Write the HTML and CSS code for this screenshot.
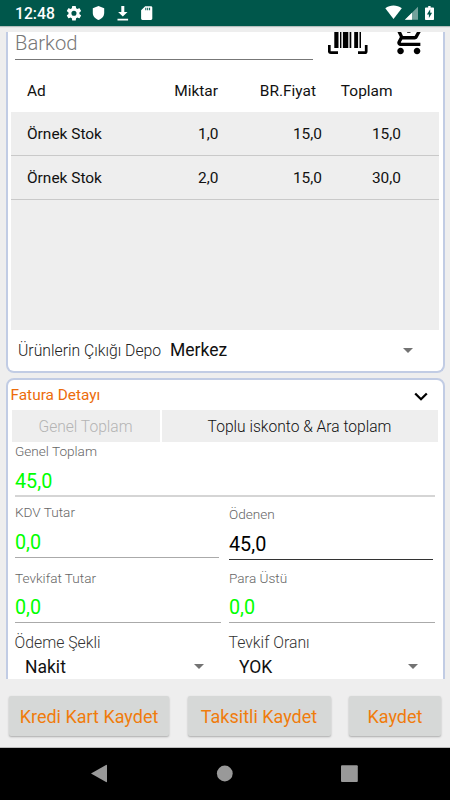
FILE: index.html
```html
<!DOCTYPE html>
<html lang="tr">
<head>
<meta charset="utf-8">
<title>Fatura</title>
<link rel="stylesheet" href="styles.css">
</head>
<body>
<header class="status">
  <span class="clock">12:48</span>
  <svg class="status-left" width="96" height="26" viewBox="0 0 96 26" fill="#fff">
    <g transform="translate(5.2 4.5) scale(.73)"><path d="M19.43 12.98c.04-.32.07-.64.07-.98s-.03-.66-.07-.98l2.11-1.65c.19-.15.24-.42.12-.64l-2-3.46c-.12-.22-.39-.3-.61-.22l-2.49 1c-.52-.4-1.08-.73-1.69-.98l-.38-2.65A.49.49 0 0 0 14 2h-4c-.25 0-.46.18-.49.42l-.38 2.65c-.61.25-1.17.59-1.69.98l-2.49-1c-.23-.09-.49 0-.61.22l-2 3.46c-.13.22-.07.49.12.64l2.11 1.65c-.04.32-.07.65-.07.98s.03.66.07.98l-2.11 1.65c-.19.15-.24.42-.12.64l2 3.46c.12.22.39.3.61.22l2.49-1c.52.4 1.08.73 1.69.98l.38 2.65c.03.24.24.42.49.42h4c.25 0 .46-.18.49-.42l.38-2.65c.61-.25 1.17-.59 1.69-.98l2.49 1c.23.09.49 0 .61-.22l2-3.46c.12-.22.07-.49-.12-.64l-2.11-1.65zM12 15.5a3.5 3.5 0 1 1 0-7 3.5 3.5 0 0 1 0 7z"/></g>
    <path d="M38.500 6l5.700 2.300v4.500c0 3.400-2.300 6-5.700 7.200-3.400-1.200-5.700-3.800-5.700-7.200V8.300z"/>
    <path d="M61.300 6h3v6h3.200l-4.700 4.600-4.700-4.600h3.200zM57.500 18.800h10.600v1.700H57.500z"/>
    <path fill-rule="evenodd" d="M85.200 6.200h5.800c.7 0 1.300.6 1.300 1.300v11c0 .8-.6 1.400-1.300 1.400h-8.600c-.7 0-1.300-.6-1.300-1.400v-8.200zM85.300 7.800v2.400h1V7.800zM87.200 7.800v2.400h1V7.800zM89.100 7.800v2.400h1V7.800z"/>
  </svg>
  <svg class="status-right" width="52" height="26" viewBox="0 0 52 26" fill="#fff">
    <path d="M.3 8.200C5 4.700 12 4.700 16.800 8.200L8.500 19z"/>
    <path d="M33 6.700v13.100H20z" opacity=".45"/><path d="M27 12.700v7.100h-7.200z"/>
    <path fill-rule="evenodd" d="M43.200 6h2.400v1.500h2.600c.5 0 .8.300.8.800v11c0 .5-.3.800-.8.800h-7.400c-.5 0-.8-.3-.8-.8v-11c0-.5.300-.8.800-.8h2.400zM45.200 9.300l-3.300 5.200h2V18l3.200-5.200h-1.900z"/>
  </svg>
</header>
<main class="viewport">
  <section class="card products">
    <div class="search">
      <div class="barcode-input"><span>Barkod</span></div>
      <svg class="scan" width="40" height="28" viewBox="0 0 40 28">
        <path d="M6.300 0h4.200v16H6.300zM12 0h1.400v16H12zM14.900 0h5.400v16h-5.400zM21.600 0h1.700v16h-1.700zM26.200 0h3.900v16h-3.900zM31.500 0h1.500v16h-1.500z"/>
        <path d="M1.300 13v6.200q0 1.500 1.500 1.500H10M38.200 13v6.200q0 1.500-1.500 1.500H30" fill="none" stroke="#000" stroke-width="2.700"/>
      </svg>
      <svg class="cart" width="40" height="28" viewBox="0 8.500 24.240 16.970"><path d="M11 9h2V6h3V4h-3V1h-2v3H8v2h3v3zm-4 9c-1.100 0-1.990.9-1.990 2S5.900 22 7 22s2-.9 2-2-.9-2-2-2zm10 0c-1.100 0-1.990.9-1.990 2s.89 2 1.990 2 2-.9 2-2-.9-2-2-2zm-9.830-3.250l.03-.12.9-1.630h7.450c.75 0 1.410-.41 1.750-1.030l3.860-7.010L19.420 4h-.01l-1.100 2-2.760 5H8.530l-.13-.27L6.160 6l-.95-2-.94-2H1v2h2l3.600 7.590-1.350 2.450c-.16.28-.25.61-.25.96 0 1.100.9 2 2 2h12v-2H7.420c-.13 0-.25-.11-.25-.25z"/></svg>
    </div>
    <div class="row head"><span class="name">Ad</span><span>Miktar</span><span>BR.Fiyat</span><span class="total">Toplam</span></div>
    <div class="list">
      <div class="row"><span class="name">Örnek Stok</span><span>1,0</span><span>15,0</span><span>15,0</span></div>
      <div class="row"><span class="name">Örnek Stok</span><span>2,0</span><span>15,0</span><span>30,0</span></div>
    </div>
    <div class="depot"><label>Ürünlerin Çıkığı Depo</label><span class="depot-value">Merkez</span><i class="caret"></i></div>
  </section>
  <section class="card detail">
    <div class="title"><h2>Fatura Detayı</h2><svg width="14" height="10" viewBox="0 0 14 10"><path d="M1.200 1.500L7 7.200l5.800-5.700" fill="none" stroke="#000" stroke-width="2.300"/></svg></div>
    <div class="tabs"><span class="tab off">Genel Toplam</span><span class="tab">Toplu iskonto &amp; Ara toplam</span></div>
    <div class="field grand"><label>Genel Toplam</label><span class="value">45,0</span></div>
    <div class="columns">
      <div>
        <div class="field tax"><label>KDV Tutar</label><span class="value">0,0</span></div>
        <div class="field hold"><label>Tevkifat Tutar</label><span class="value">0,0</span></div>
        <div class="choice"><label>Ödeme Şekli</label><div class="select"><span>Nakit</span><i class="caret"></i></div></div>
      </div>
      <div>
        <div class="field paid"><label>Ödenen</label><span class="value">45,0</span></div>
        <div class="field change"><label>Para Üstü</label><span class="value">0,0</span></div>
        <div class="choice"><label class="rate">Tevkif Oranı</label><div class="select"><span>YOK</span><i class="caret"></i></div></div>
      </div>
    </div>
  </section>
</main>
<footer class="actions"><button class="credit">Kredi Kart Kaydet</button><button class="instalment">Taksitli Kaydet</button><button class="save">Kaydet</button></footer>
<nav class="nav">
  <svg width="450" height="52" viewBox="0 0 450 52" fill="#999"><path d="M91 25.500L106 17q1-.5 1 .5v16q0 1-1 .5z"/><circle cx="224.800" cy="25.500" r="7.900"/><rect x="341" y="17.300" width="16.800" height="16.700" rx="1"/></svg>
</nav>
</body>
</html>
```
FILE: styles.css
```css
* { box-sizing: border-box; }
body { margin: 0; width: 450px; height: 800px; overflow: hidden; background: #eee; color: #111; font-family: Roboto, "Noto Sans", sans-serif; font-size: 15.450px; display: flex; flex-direction: column; }
svg { display: block; flex: none; }
label { display: block; white-space: nowrap; font-weight: 300; }
.status { height: 26px; flex: none; background: #00574b; display: flex; box-shadow: 0 1px 1px #b4bfbd; }
.clock { width: 60px; padding-left: 15px; color: #fff; font-size: 15.700px; font-weight: 500; line-height: 28px; }
.status-right { margin-left: auto; margin-right: 13px; }
.viewport { height: 647px; margin-top: 6px; flex: none; padding: 0 5.500px; overflow: hidden; }
.card { background: #fff; border: 2px solid #c1cce4; }
.products { height: 340.500px; border-top: 0; border-radius: 0 0 8px 8px; padding: 0 3.500px; }
.search { height: 29px; display: flex; }
.barcode-input { width: 298px; height: 28px; margin-left: 4px; border-bottom: 1px solid #777; font-size: 20.200px; font-weight: 300; line-height: 23px; color: #777; }
.scan { margin-left: 14.500px; }
.cart { margin-left: 21px; }
.row { display: grid; grid-template-columns: 120px 87.500px 103.500px 79px; height: 44px; border-bottom: 1.500px solid #c9c9c9; line-height: 45px; text-align: right; }
.row .name { text-align: left; padding-left: 16px; }
.head { height: 51px; border: 0; line-height: 60px; }
.row.head { grid-template-columns: 120px 87px 98px 76.500px; }
.list { height: 218px; background: #eee; }
.depot { height: 40px; display: flex; align-items: center; padding-left: 7px; }
.depot label { width: 152px; font-size: 15.750px; color: #222; }
.depot-value { flex: 1; font-size: 17.500px; }
.caret { display: block; flex: none; width: 0; border: 5.500px solid transparent; border-top-color: #737373; border-bottom: 0; }
.depot .caret { margin-right: 26px; }
.detail { margin-top: 5.500px; height: 330px; border-radius: 8px 8px 0 0; padding: 0 4px; }
.title { height: 30px; display: flex; align-items: center; justify-content: space-between; padding-right: 11px; }
h2 { margin: -1px 0 0 -1px; color: #ec6c0b; font-size: 15.400px; font-weight: 400; }
.title svg { margin-top: 3px; }
.tabs { display: grid; grid-template-columns: 148px 276px; gap: 2px; height: 32.500px; text-align: center; line-height: 35px; }
.tab { height: 32px; background: #eee; color: #111; font-size: 15.600px; font-weight: 300; }
.tab.off { color: #b4b4b4; }
.field { margin-left: 3.500px; border-bottom: 1px solid #aaa; color: #666; }
.field label { font-size: 13.600px; line-height: 17px; }
.value { display: block; font-size: 19.800px; color: #0f0; }
.grand { width: 420px; height: 54.500px; border-bottom: 2px solid #d5d5d5; }
.grand .value { line-height: 43px; }
.columns { display: grid; grid-template-columns: 214px 210px; }
.tax { width: 204px; height: 61px; padding-top: 7px; }
.tax .value, .paid .value { line-height: 43px; }
.hold { width: 206px; height: 65px; padding-top: 11.500px; }
.hold .value, .change .value { line-height: 42px; }
.paid { width: 204px; height: 63px; padding-top: 9px; border-color: #333; }
.change { width: 206px; height: 63px; padding-top: 9.500px; }
.paid .value { color: #000; }
.choice { padding: 9px 0 0 3px; }
.choice label { font-size: 15.800px; line-height: 22px; color: #333; }
.select { height: 25px; width: 189px; padding-left: 10.500px; display: flex; justify-content: space-between; align-items: center; font-size: 17.500px; }
.actions { height: 69px; flex: none; padding: 17px 9px 0; display: flex; justify-content: space-between; border-bottom: 1px solid #bbb; }
button { height: 40px; padding: 0; border: 0; border-radius: 2px; background: #d6d8d7; color: #f07c0c; font: 18px Roboto, sans-serif; line-height: 41px; box-shadow: 0 1px 2px #aaa; white-space: nowrap; }
.credit { width: 160px; }
.instalment { width: 143px; }
.save { width: 92px; }
.nav { height: 52px; flex: none; background: #000; }
```
